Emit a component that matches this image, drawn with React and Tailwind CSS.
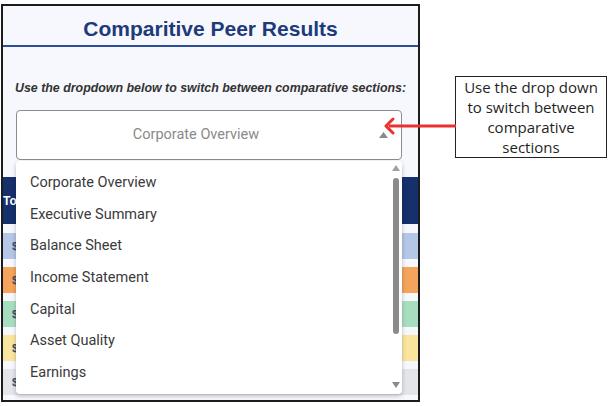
import React from "react";

const items = [
  "Corporate Overview",
  "Executive Summary",
  "Balance Sheet",
  "Income Statement",
  "Capital",
  "Asset Quality",
  "Earnings",
];

const rows = ["bg-[#b4c7e7]", "bg-[#f5a45c]", "bg-[#a8dec0]", "bg-[#fae59f]", "bg-[#e3e5ea]"];

export default function App() {
  return (
    <div className="relative flex h-[406px] w-[611px] overflow-hidden bg-white">
      {/* Panel */}
      <div className="relative ml-[1px] mt-[4px] flex h-[398px] w-[419px] flex-col border-2 border-[#1c1c1c] bg-[#f7f8fd]">
        <div className="flex h-[41px] items-center justify-center border-b-2 border-[#2d4f96] pt-[5px]">
          <h1 className="font-['Liberation_Sans',Arial,sans-serif] text-[21px] font-bold leading-none text-[#1d3a7a]">
            Comparitive Peer Results
          </h1>
        </div>
        <p className="mt-[34px] text-center font-['Liberation_Sans',Arial,sans-serif] text-[12.4px] font-bold italic leading-[14px] text-[#333333]">
          Use the dropdown below to switch between comparative sections:
        </p>
        <div className="relative ml-[13px] mt-[15px] flex h-[50px] w-[386px] items-center rounded-[4px] border border-[#8c8c8c] bg-white pr-[26px]">
          <span className="flex-1 text-center font-['Roboto',sans-serif] text-[14.5px] text-[#8a8a8a]">
            Corporate Overview
          </span>
          <svg className="absolute right-[13px] top-[21px]" width="9" height="6" viewBox="0 0 9 6">
            <path d="M0 6 L4.5 0 L9 6 Z" fill="#8a8a8a" />
          </svg>
        </div>
        {/* Table behind */}
        <div className="mt-[17px] flex flex-col">
          <div className="flex h-[47px] items-center bg-[#16306b]">
            <span className="font-['Liberation_Sans',Arial,sans-serif] text-[12px] font-bold text-white">Tot</span>
          </div>
          <div className="mt-[9px] flex flex-col gap-[8px]">
            {rows.map((c, i) => (
              <div key={i} className={`flex h-[26px] items-center pl-[9px] ${c}`}>
                <span className="font-['Liberation_Sans',Arial,sans-serif] text-[11px] font-bold text-[#3d4b66]">$</span>
              </div>
            ))}
          </div>
        </div>
        {/* Dropdown list */}
        <div className="absolute left-[13px] top-[155px] flex h-[233px] w-[386px] rounded-[4px] bg-white shadow-[0_2px_4px_rgba(0,0,0,0.25)]">
          <ul className="flex-1 pt-[6px]">
            {items.map((t) => (
              <li
                key={t}
                className="flex h-[31.67px] items-center pl-[14px] font-['Roboto',sans-serif] text-[14.5px] text-[#3a3a3a]"
              >
                {t}
              </li>
            ))}
          </ul>
          <div className="relative w-[12px]">
            <svg className="absolute left-[2px] top-[4px]" width="8" height="6" viewBox="0 0 8 6">
              <path d="M0 6 L4 0 L8 6 Z" fill="#a0a0a0" />
            </svg>
            <div className="absolute left-[3px] top-[17px] h-[156px] w-[6px] rounded-full bg-[#8a8a8a]" />
            <svg className="absolute left-[2px] top-[221px]" width="8" height="6" viewBox="0 0 8 6">
              <path d="M0 0 L4 6 L8 0 Z" fill="#8a8a8a" />
            </svg>
          </div>
        </div>
      </div>

      {/* Callout */}
      <div className="ml-[35px] mt-[76px] flex h-[82px] w-[152px] flex-col items-center justify-center border border-[#222] bg-white text-center font-['Open_Sans',sans-serif] text-[15px] leading-[20px] text-[#1f1f1f]">
        <span>Use the drop down</span>
        <span>to switch between</span>
        <span>comparative</span>
        <span>sections</span>
      </div>

      {/* Red arrow annotation */}
      <svg className="absolute left-[383px] top-[117px]" width="74" height="18" viewBox="0 0 74 18">
        <line x1="6" y1="9" x2="73" y2="9" stroke="#e8322f" strokeWidth="3" />
        <path d="M10 2 L3 9 L10 16" fill="none" stroke="#e8322f" strokeWidth="3" strokeLinecap="round" strokeLinejoin="round" />
      </svg>
    </div>
  );
}
